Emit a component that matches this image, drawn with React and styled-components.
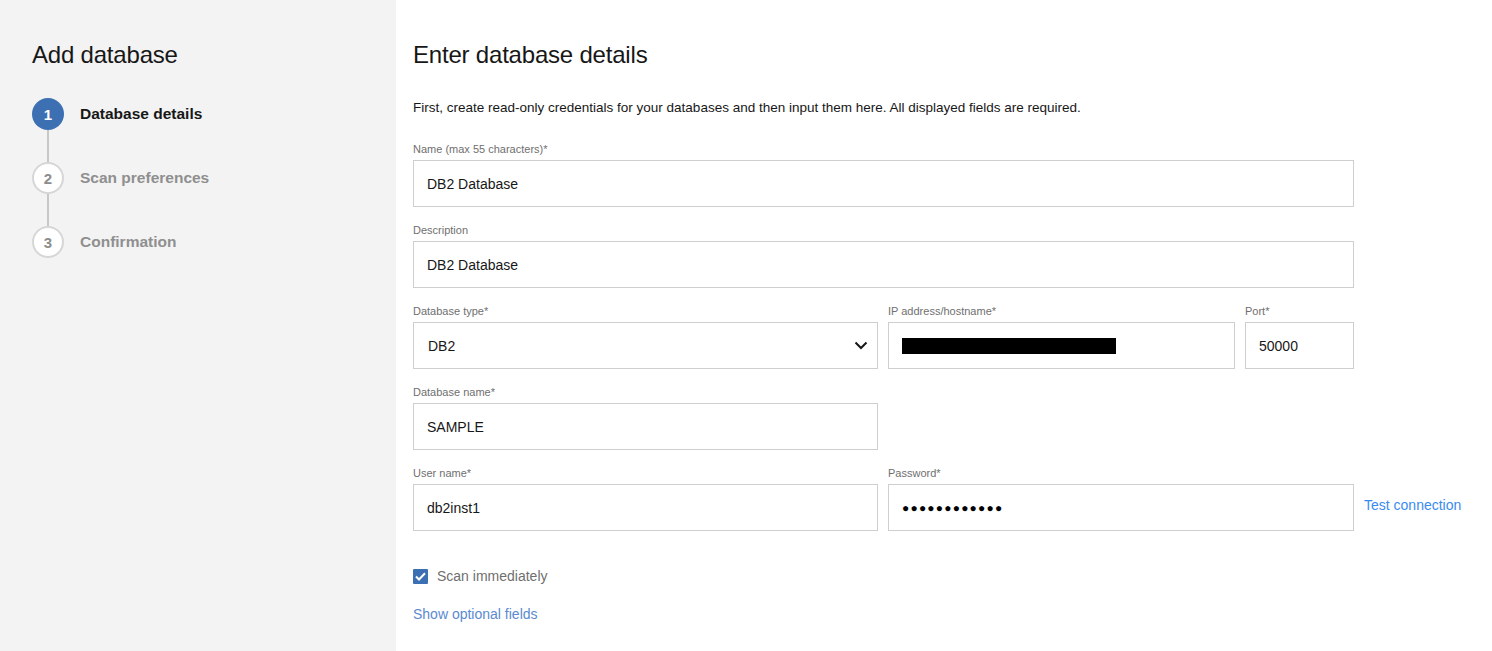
import React from 'react'
import styled, { createGlobalStyle } from 'styled-components'

const GlobalStyle = createGlobalStyle`
  html, body {
    margin: 0;
    padding: 0;
    background: #ffffff;
  }
  body {
    font-family: "Liberation Sans", Arial, sans-serif;
    color: #171717;
  }
`

const steps = [
  { n: 1, label: 'Database details', active: true },
  { n: 2, label: 'Scan preferences' },
  { n: 3, label: 'Confirmation' },
]

const ChevronDown = () => (
  <svg width="14" height="9" viewBox="0 0 14 9" fill="none">
    <path d="M1.5 1.5 L7 7 L12.5 1.5" stroke="#171717" strokeWidth="2" />
  </svg>
)

const CheckMark = () => (
  <svg width="11" height="9" viewBox="0 0 11 9" fill="none">
    <path d="M1 4.5 L4 7.5 L10 1.2" stroke="#ffffff" strokeWidth="2" />
  </svg>
)

export default () => (
  <Page>
    <GlobalStyle />
    <Sidebar>
      <Heading>Add database</Heading>
      <Steps>
        {steps.map(({ n, label, active }, index) => (
          <Step key={n} last={index === steps.length - 1}>
            <Circle active={active}>{n}</Circle>
            <StepLabel active={active}>{label}</StepLabel>
          </Step>
        ))}
      </Steps>
    </Sidebar>
    <Main>
      <Heading>Enter database details</Heading>
      <Intro>
        First, create read-only credentials for your databases and then input them here. All displayed fields are required.
      </Intro>
      <Form>
        <Field span="1 / 4">
          <Label>Name (max 55 characters)*</Label>
          <Box>DB2 Database</Box>
        </Field>
        <Field span="1 / 4">
          <Label>Description</Label>
          <Box>DB2 Database</Box>
        </Field>
        <Field span="1 / 2">
          <Label>Database type*</Label>
          <Box select>
            <span>DB2</span>
            <ChevronDown />
          </Box>
        </Field>
        <Field span="2 / 3">
          <Label>IP address/hostname*</Label>
          <Box>
            <Redacted />
          </Box>
        </Field>
        <Field span="3 / 4">
          <Label>Port*</Label>
          <Box>50000</Box>
        </Field>
        <Field span="1 / 2">
          <Label>Database name*</Label>
          <Box>SAMPLE</Box>
        </Field>
        <Field span="1 / 2">
          <Label>User name*</Label>
          <Box>db2inst1</Box>
        </Field>
        <Field span="2 / 4">
          <Label>Password*</Label>
          <Box>
            <Dots>●●●●●●●●●●●●</Dots>
          </Box>
        </Field>
        <TestLink>Test connection</TestLink>
      </Form>
      <CheckRow>
        <Checkbox>
          <CheckMark />
        </Checkbox>
        <CheckLabel>Scan immediately</CheckLabel>
      </CheckRow>
      <OptionalLink>Show optional fields</OptionalLink>
    </Main>
  </Page>
)

const Page = styled.div`
  display: flex;
  min-height: 100vh;
`

const Sidebar = styled.aside`
  width: 396px;
  flex-shrink: 0;
  background: #f3f3f3;
  padding: 41px 0 0 32px;
  box-sizing: border-box;
`

const Heading = styled.h1`
  margin: 0;
  font-size: 24px;
  font-weight: 400;
  line-height: 28px;
  color: #171717;
  letter-spacing: -0.2px;
`

const Steps = styled.ol`
  list-style: none;
  margin: 29px 0 0;
  padding: 0;
`

const Step = styled.li`
  position: relative;
  display: flex;
  align-items: center;
  height: 32px;
  margin-bottom: ${p => (p.last ? 0 : '32px')};

  &::after {
    content: '';
    display: ${p => (p.last ? 'none' : 'block')};
    position: absolute;
    left: 15px;
    top: 32px;
    width: 2px;
    height: 32px;
    background: #c7c7c7;
  }
`

const Circle = styled.span`
  width: 32px;
  height: 32px;
  border-radius: 50%;
  box-sizing: border-box;
  display: flex;
  align-items: center;
  justify-content: center;
  font-size: 15px;
  font-weight: 700;
  background: ${p => (p.active ? '#3d70b2' : '#ffffff')};
  border: ${p => (p.active ? 'none' : '2px solid #d6d6d6')};
  color: ${p => (p.active ? '#ffffff' : '#8c8c8c')};
`

const StepLabel = styled.span`
  margin-left: 16px;
  font-size: 15.5px;
  font-weight: 700;
  color: ${p => (p.active ? '#171717' : '#8f8f8f')};
`

const Main = styled.main`
  flex: 1;
  padding: 41px 0 0 17px;
`

const Intro = styled.p`
  margin: 30px 0 0;
  font-size: 13.5px;
  line-height: 18px;
  color: #171717;
`

const Form = styled.div`
  display: grid;
  grid-template-columns: 465px 347px 109px auto;
  column-gap: 10px;
  row-gap: 15px;
  margin-top: 24px;
  align-items: end;
`

const Field = styled.div`
  grid-column: ${p => p.span};
  display: flex;
  flex-direction: column;
`

const Label = styled.label`
  font-size: 11px;
  line-height: 16px;
  color: #6f6f6f;
  margin-bottom: 3px;
`

const Box = styled.div`
  height: 47px;
  box-sizing: border-box;
  border: 1px solid #cfcfcf;
  background: #ffffff;
  display: flex;
  align-items: center;
  justify-content: ${p => (p.select ? 'space-between' : 'flex-start')};
  padding: ${p => (p.select ? '0 9px 0 14px' : '0 13px')};
  font-size: 14px;
  color: #171717;
`

const Redacted = styled.span`
  display: block;
  width: 214px;
  height: 16px;
  background: #000000;
`

const Dots = styled.span`
  font-size: 12px;
  letter-spacing: 1.2px;
  color: #000000;
`

const TestLink = styled.a`
  grid-column: 4 / 5;
  align-self: center;
  margin-top: 13px;
  font-size: 14px;
  color: #3a8bf0;
  cursor: pointer;
`

const CheckRow = styled.div`
  display: flex;
  align-items: center;
  margin-top: 37px;
`

const Checkbox = styled.span`
  width: 15px;
  height: 15px;
  border-radius: 1px;
  background: #3d70b2;
  display: flex;
  align-items: center;
  justify-content: center;
`

const CheckLabel = styled.span`
  margin-left: 9px;
  font-size: 14px;
  color: #6f6f6f;
`

const OptionalLink = styled.a`
  display: block;
  margin-top: 22px;
  font-size: 14px;
  color: #5a8ad0;
  cursor: pointer;
`
